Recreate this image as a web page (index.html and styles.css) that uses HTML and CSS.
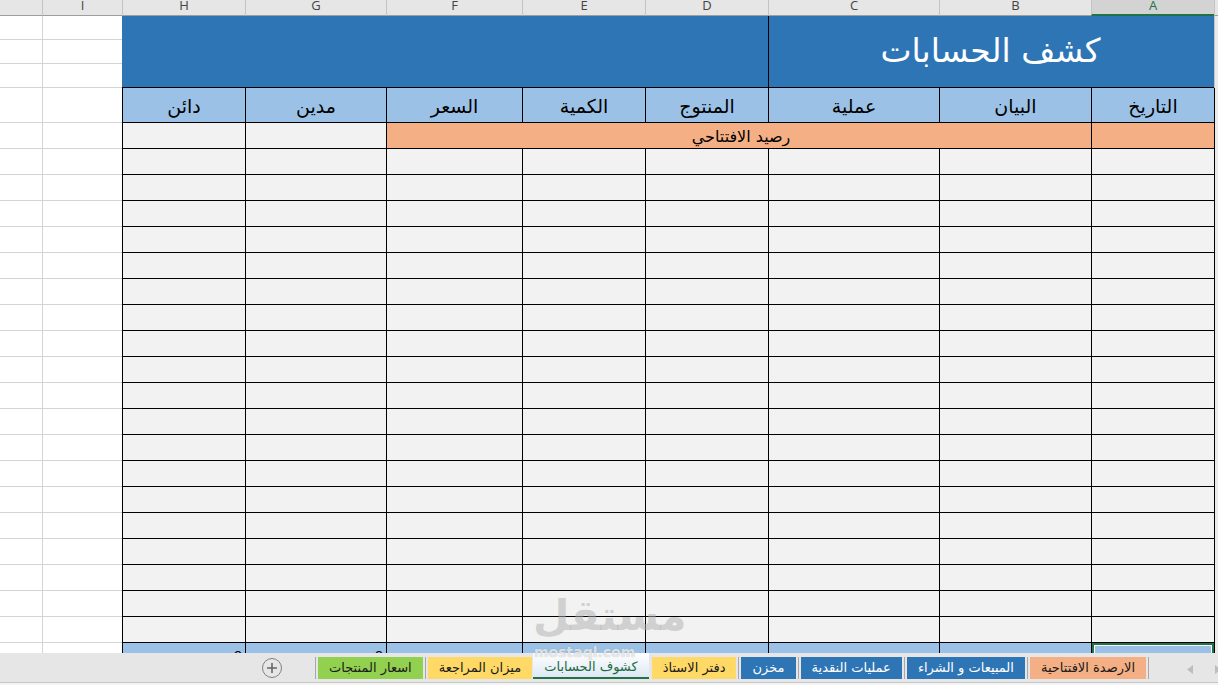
FILE: index.html
```html
<!DOCTYPE html>
<html lang="ar">
<head>
<meta charset="utf-8">
<title>كشف الحسابات</title>
<link rel="stylesheet" href="styles.css">
</head>
<body>
<div class="app">
  <div class="sheet">
    <div class="grid">
      <!-- column letters -->
      <div class="row">
        <div class="ch corner"></div>
        <div class="ch ch-active">A</div>
        <div class="ch">B</div>
        <div class="ch">C</div>
        <div class="ch">D</div>
        <div class="ch">E</div>
        <div class="ch">F</div>
        <div class="ch">G</div>
        <div class="ch">H</div>
        <div class="ch">I</div>
        <div class="ch ch-j"><span>J</span></div>
      </div>

      <!-- title band -->
      <div class="row">
        <div class="rh rh-plain"></div>
        <div class="title-main">كشف الحسابات</div>
        <div class="title-side"></div>
        <div class="gl"></div>
        <div class="gl gl-j"></div>
      </div>
      <div class="row"><div class="rh rh-plain"></div><div class="gl"></div><div class="gl gl-j"></div></div>
      <div class="row"><div class="rh rh-plain"></div><div class="gl"></div><div class="gl gl-j"></div></div>

      <!-- column titles -->
      <div class="row">
        <div class="rh"></div>
        <div class="hd">التاريخ</div>
        <div class="hd">البيان</div>
        <div class="hd">عملية</div>
        <div class="hd">المنتوج</div>
        <div class="hd">الكمية</div>
        <div class="hd">السعر</div>
        <div class="hd">مدين</div>
        <div class="hd">دائن</div>
        <div class="gl"></div>
        <div class="gl gl-j"></div>
      </div>

      <!-- opening balance -->
      <div class="row">
        <div class="rh"></div>
        <div class="op"></div>
        <div class="op op-wide">رصيد الافتتاحي</div>
        <div class="dc"></div>
        <div class="dc"></div>
        <div class="gl"></div>
        <div class="gl gl-j"></div>
      </div>

      <!-- entry rows -->
      <div class="row"><div class="rh"></div><div class="dc"></div><div class="dc"></div><div class="dc"></div><div class="dc"></div><div class="dc"></div><div class="dc"></div><div class="dc"></div><div class="dc"></div><div class="gl"></div><div class="gl gl-j"></div></div>
      <div class="row"><div class="rh"></div><div class="dc"></div><div class="dc"></div><div class="dc"></div><div class="dc"></div><div class="dc"></div><div class="dc"></div><div class="dc"></div><div class="dc"></div><div class="gl"></div><div class="gl gl-j"></div></div>
      <div class="row"><div class="rh"></div><div class="dc"></div><div class="dc"></div><div class="dc"></div><div class="dc"></div><div class="dc"></div><div class="dc"></div><div class="dc"></div><div class="dc"></div><div class="gl"></div><div class="gl gl-j"></div></div>
      <div class="row"><div class="rh"></div><div class="dc"></div><div class="dc"></div><div class="dc"></div><div class="dc"></div><div class="dc"></div><div class="dc"></div><div class="dc"></div><div class="dc"></div><div class="gl"></div><div class="gl gl-j"></div></div>
      <div class="row"><div class="rh"></div><div class="dc"></div><div class="dc"></div><div class="dc"></div><div class="dc"></div><div class="dc"></div><div class="dc"></div><div class="dc"></div><div class="dc"></div><div class="gl"></div><div class="gl gl-j"></div></div>
      <div class="row"><div class="rh"></div><div class="dc"></div><div class="dc"></div><div class="dc"></div><div class="dc"></div><div class="dc"></div><div class="dc"></div><div class="dc"></div><div class="dc"></div><div class="gl"></div><div class="gl gl-j"></div></div>
      <div class="row"><div class="rh"></div><div class="dc"></div><div class="dc"></div><div class="dc"></div><div class="dc"></div><div class="dc"></div><div class="dc"></div><div class="dc"></div><div class="dc"></div><div class="gl"></div><div class="gl gl-j"></div></div>
      <div class="row"><div class="rh"></div><div class="dc"></div><div class="dc"></div><div class="dc"></div><div class="dc"></div><div class="dc"></div><div class="dc"></div><div class="dc"></div><div class="dc"></div><div class="gl"></div><div class="gl gl-j"></div></div>
      <div class="row"><div class="rh"></div><div class="dc"></div><div class="dc"></div><div class="dc"></div><div class="dc"></div><div class="dc"></div><div class="dc"></div><div class="dc"></div><div class="dc"></div><div class="gl"></div><div class="gl gl-j"></div></div>
      <div class="row"><div class="rh"></div><div class="dc"></div><div class="dc"></div><div class="dc"></div><div class="dc"></div><div class="dc"></div><div class="dc"></div><div class="dc"></div><div class="dc"></div><div class="gl"></div><div class="gl gl-j"></div></div>
      <div class="row"><div class="rh"></div><div class="dc"></div><div class="dc"></div><div class="dc"></div><div class="dc"></div><div class="dc"></div><div class="dc"></div><div class="dc"></div><div class="dc"></div><div class="gl"></div><div class="gl gl-j"></div></div>
      <div class="row"><div class="rh"></div><div class="dc"></div><div class="dc"></div><div class="dc"></div><div class="dc"></div><div class="dc"></div><div class="dc"></div><div class="dc"></div><div class="dc"></div><div class="gl"></div><div class="gl gl-j"></div></div>
      <div class="row"><div class="rh"></div><div class="dc"></div><div class="dc"></div><div class="dc"></div><div class="dc"></div><div class="dc"></div><div class="dc"></div><div class="dc"></div><div class="dc"></div><div class="gl"></div><div class="gl gl-j"></div></div>
      <div class="row"><div class="rh"></div><div class="dc"></div><div class="dc"></div><div class="dc"></div><div class="dc"></div><div class="dc"></div><div class="dc"></div><div class="dc"></div><div class="dc"></div><div class="gl"></div><div class="gl gl-j"></div></div>
      <div class="row"><div class="rh"></div><div class="dc"></div><div class="dc"></div><div class="dc"></div><div class="dc"></div><div class="dc"></div><div class="dc"></div><div class="dc"></div><div class="dc"></div><div class="gl"></div><div class="gl gl-j"></div></div>
      <div class="row"><div class="rh"></div><div class="dc"></div><div class="dc"></div><div class="dc"></div><div class="dc"></div><div class="dc"></div><div class="dc"></div><div class="dc"></div><div class="dc"></div><div class="gl"></div><div class="gl gl-j"></div></div>
      <div class="row"><div class="rh"></div><div class="dc"></div><div class="dc"></div><div class="dc"></div><div class="dc"></div><div class="dc"></div><div class="dc"></div><div class="dc"></div><div class="dc"></div><div class="gl"></div><div class="gl gl-j"></div></div>
      <div class="row"><div class="rh"></div><div class="dc"></div><div class="dc"></div><div class="dc"></div><div class="dc"></div><div class="dc"></div><div class="dc"></div><div class="dc"></div><div class="dc"></div><div class="gl"></div><div class="gl gl-j"></div></div>
      <div class="row"><div class="rh"></div><div class="dc"></div><div class="dc"></div><div class="dc"></div><div class="dc"></div><div class="dc"></div><div class="dc"></div><div class="dc"></div><div class="dc"></div><div class="gl"></div><div class="gl gl-j"></div></div>

      <!-- totals -->
      <div class="row">
        <div class="rh"></div>
        <div class="tot sel"></div>
        <div class="tot"></div>
        <div class="tot"></div>
        <div class="tot"></div>
        <div class="tot"></div>
        <div class="tot"></div>
        <div class="tot">0</div>
        <div class="tot">0</div>
        <div class="gl"></div>
        <div class="gl gl-j"></div>
      </div>
    </div>
  </div>

  <div class="tabbar">
    <div class="nav">
      <svg width="67" height="29" viewBox="0 0 67 29" aria-hidden="true">
        <polygon points="42,12 36,16.5 42,21" fill="#bdbdbd"/>
        <polygon points="64,12 70,16.5 64,21" fill="#bdbdbd"/>
      </svg>
    </div>
    <span class="sep"></span>
    <div class="tab tab-orange">الارصدة الافتتاحية</div>
    <span class="sep"></span>
    <div class="tab tab-blue">المبيعات و الشراء</div>
    <span class="sep"></span>
    <div class="tab tab-blue">عمليات النقدية</div>
    <span class="sep"></span>
    <div class="tab tab-blue">مخزن</div>
    <span class="sep"></span>
    <div class="tab tab-yellow">دفتر الاستاذ</div>
    <div class="tab tab-active">كشوف الحسابات</div>
    <div class="tab tab-yellow">ميزان المراجعة</div>
    <span class="sep"></span>
    <div class="tab tab-green">اسعار المنتجات</div>
    <span class="sep"></span>
    <div class="add">
      <svg width="22" height="22" viewBox="0 0 22 22" aria-hidden="true">
        <circle cx="11" cy="11" r="9.5" fill="none" stroke="#808080" stroke-width="1"/>
        <path d="M11 6V16M6 11H16" stroke="#666" stroke-width="1.6"/>
      </svg>
    </div>
  </div>
  <div class="status"></div>

  <div class="brand-mark">
    <span class="brand-ar">مستقل</span>
  </div>
  <div class="brand-site">mostaql.com</div>
</div>
</body>
</html>
```

FILE: styles.css
```css
html, body {
  margin: 0;
  padding: 0;
}

body {
  width: 1218px;
  height: 685px;
  overflow: hidden;
  background: #ffffff;
  font-family: "DejaVu Sans", sans-serif;
  color: #000;
}

.app {
  position: relative;
  display: flex;
  flex-direction: column;
  height: 685px;
}

/* ---------- worksheet ---------- */

.sheet {
  flex: none;
  height: 653px;
  overflow: hidden;
}

.grid {
  display: grid;
  direction: rtl;
  /* row header, A .. H, I, J (right to left) */
  grid-template-columns: 4px 123px 152px 171px 123px 123px 136px 141px 123px 80px 42px;
  grid-template-rows: 16px 24px 24px 24px 35px repeat(21, 26px);
}

.row {
  display: contents;
}

.row > div {
  box-sizing: border-box;
  min-width: 0;
}

/* column letters */
.ch {
  background: #e6e6e6;
  border-left: 1px solid #c4c4c4;
  border-bottom: 1px solid #9e9e9e;
  font-family: "Open Sans", "Liberation Sans", sans-serif;
  font-size: 13px;
  line-height: 11px;
  color: #444;
  text-align: center;
  overflow: hidden;
}

.ch-active {
  background: #d3d3d3;
  color: #217346;
  border-bottom: 2px solid #217346;
}

.ch-j {
  text-align: left;
  border-left: none;
}

.ch-j span {
  margin-left: -5px;
}

.corner {
  border-left: 1px solid #c4c4c4;
}

/* row header sliver on the right edge */
.rh {
  background: #ebebeb;
  border-left: 1px solid #000;
}

.rh-plain {
  border-left: 1px solid #c4c4c4;
}

/* plain sheet gridlines */
.gl {
  background: #fff;
  border-left: 1px solid #d4d4d4;
  border-bottom: 1px solid #d4d4d4;
}

.gl-j {
  border-left: none;
}

/* title band */
.title-main {
  grid-column: 2 / span 3;
  grid-row: 2 / span 3;
  background: #2e75b6;
  border-left: 1px solid #000;
  border-bottom: 1px solid #000;
  color: #fff;
  font-size: 33px;
  display: flex;
  align-items: center;
  justify-content: center;
  padding-bottom: 2px;
  padding-right: 2px;
}

.title-side {
  grid-column: 5 / span 5;
  grid-row: 2 / span 3;
  background: #2e75b6;
  border-bottom: 1px solid #000;
}

/* column titles */
.hd {
  background: #9bc2e6;
  border-left: 1px solid #000;
  border-bottom: 1px solid #000;
  font-size: 19px;
  display: flex;
  align-items: flex-end;
  justify-content: center;
  padding-bottom: 3px;
  line-height: 26px;
}

/* data cells */
.dc {
  background: #f2f2f2;
  border-left: 1px solid #000;
  border-bottom: 1px solid #000;
}

.op {
  background: #f4b084;
  border-left: 1px solid #000;
  border-bottom: 1px solid #000;
}

.op-wide {
  grid-column: span 5;
  font-size: 16px;
  display: flex;
  align-items: center;
  justify-content: center;
  padding-left: 4px;
  padding-top: 1px;
}

.tot {
  background: #9bc2e6;
  border-left: 1px solid #000;
  border-bottom: 1px solid #000;
  font-family: "Liberation Sans", sans-serif;
  font-size: 15px;
  line-height: 25px;
  text-align: right;
  padding-right: 3px;
}

.sel {
  box-shadow: inset 0 0 0 2px #217346, inset 0 0 0 3px #ffffff;
}

/* ---------- sheet tabs ---------- */

.tabbar {
  flex: none;
  height: 30px;
  box-sizing: border-box;
  padding-top: 4px;
  background: #e6e6e6;
  border-bottom: 1px solid #c6c6c6;
  display: flex;
  direction: rtl;
  align-items: flex-start;
}

.nav {
  width: 67px;
  height: 22px;
  margin-top: -4px;
  flex: none;
  overflow: hidden;
}

.sep {
  flex: none;
  width: 1px;
  height: 22px;
  margin: 0 2px;
  background: #a8a8a8;
}

.tab {
  flex: none;
  height: 22px;
  box-sizing: border-box;
  padding: 0 11px;
  font-size: 13px;
  line-height: 21px;
  color: #1a1a1a;
  white-space: nowrap;
}

.tab-orange {
  background: #f4b084;
}

.tab-blue {
  background: #2e75b6;
  color: #fff;
}

.tab-yellow {
  background: #ffd966;
}

.tab-green {
  background: #92d050;
}

.tab-active {
  height: 26px;
  margin: -4px 3px 0 1px;
  padding-top: 4px;
  background: linear-gradient(#ffffff, #dde8f4);
  border-bottom: 2px solid #217346;
  color: #1e6a3f;
  line-height: 20px;
}

.add {
  flex: none;
  width: 22px;
  height: 22px;
  margin-right: 30px;
}

.add svg {
  display: block;
}

.status {
  flex: none;
  height: 2px;
  background: #f3f3f3;
}

/* faint brand mark floating above the sheet */
.brand-mark {
  position: absolute;
  left: 533px;
  top: 590px;
  pointer-events: none;
}

.brand-ar {
  display: block;
  font-size: 42px;
  font-weight: bold;
  line-height: 52px;
  color: rgba(175, 175, 175, 0.5);
}

.brand-site {
  position: absolute;
  left: 534px;
  top: 646px;
  font-size: 14px;
  font-weight: bold;
  line-height: 13px;
  color: rgba(255, 255, 255, 0.7);
  text-shadow: 0 0 1px rgba(120, 120, 120, 0.6);
  pointer-events: none;
}
```
